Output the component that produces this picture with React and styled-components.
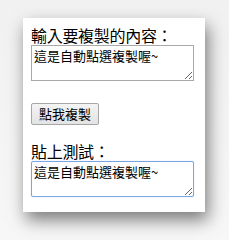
import styled, {createGlobalStyle} from "styled-components";
import {useEffect, useRef} from "react";

const GlobalStyle = createGlobalStyle`
    html, body {
        margin: 0;
        padding: 0;
        background: #f3f3f3;
    }
    body {
        font-family: "Noto Sans CJK TC", "Liberation Sans", sans-serif;
    }
`;

const TEXT = "這是自動點選複製喔~";

export default function App() {
    const pasteRef = useRef(null);

    useEffect(() => {
        const el = pasteRef.current;
        if (el) {
            el.focus();
            el.setSelectionRange(TEXT.length, TEXT.length);
        }
    }, []);

    return (
        <Page>
            <GlobalStyle/>
            <Card>
                <Label>輸入要複製的內容：</Label>
                <TextBox defaultValue={TEXT}/>
                <CopyButton>點我複製</CopyButton>
                <Label $top={17}>貼上測試：</Label>
                <TextBox ref={pasteRef} defaultValue={TEXT} $focused/>
            </Card>
        </Page>
    );
}

const Page = styled.div`
    width: 229px;
    height: 240px;
    padding: 18px 0 0 23px;
    box-sizing: border-box;
    background: linear-gradient(#f1f1f1, #f7f7f7);
`;

const Card = styled.div`
    width: 182px;
    height: 194px;
    box-sizing: border-box;
    padding: 8px 11px 0 8px;
    background: #fff;
    display: flex;
    flex-direction: column;
    align-items: flex-start;
    box-shadow: 3px 8px 16px rgba(0, 0, 0, 0.5);
`;

const Label = styled.div`
    font-size: 16px;
    line-height: 19px;
    color: #000;
    margin-top: ${(p) => p.$top || 0}px;
    letter-spacing: -0.3px;
`;

const TextBox = styled.textarea`
    width: 163px;
    height: 36px;
    box-sizing: border-box;
    margin: 0;
    padding: 2px 2px;
    font-family: "Noto Sans CJK TC", "Liberation Sans", sans-serif;
    font-size: 13px;
    line-height: 16px;
    color: #000;
    border: 1px solid ${(p) => (p.$focused ? "#7ba4e4" : "#a9a9a9")};
    box-shadow: ${(p) => (p.$focused ? "0 0 1px #a8c6f2" : "none")};
    border-radius: ${(p) => (p.$focused ? "2px" : "0")};
    outline: none;
    caret-color: #000;
`;

const CopyButton = styled.button`
    margin-top: 22px;
    width: 68px;
    height: 22px;
    padding: 0;
    font-family: "Noto Sans CJK TC", "Liberation Sans", sans-serif;
    font-size: 13px;
    line-height: 20px;
    color: #000;
    background: linear-gradient(#f4f4f4, #e3e3e3);
    border: 1px solid #a6a6a6;
    border-radius: 2px;
`;
